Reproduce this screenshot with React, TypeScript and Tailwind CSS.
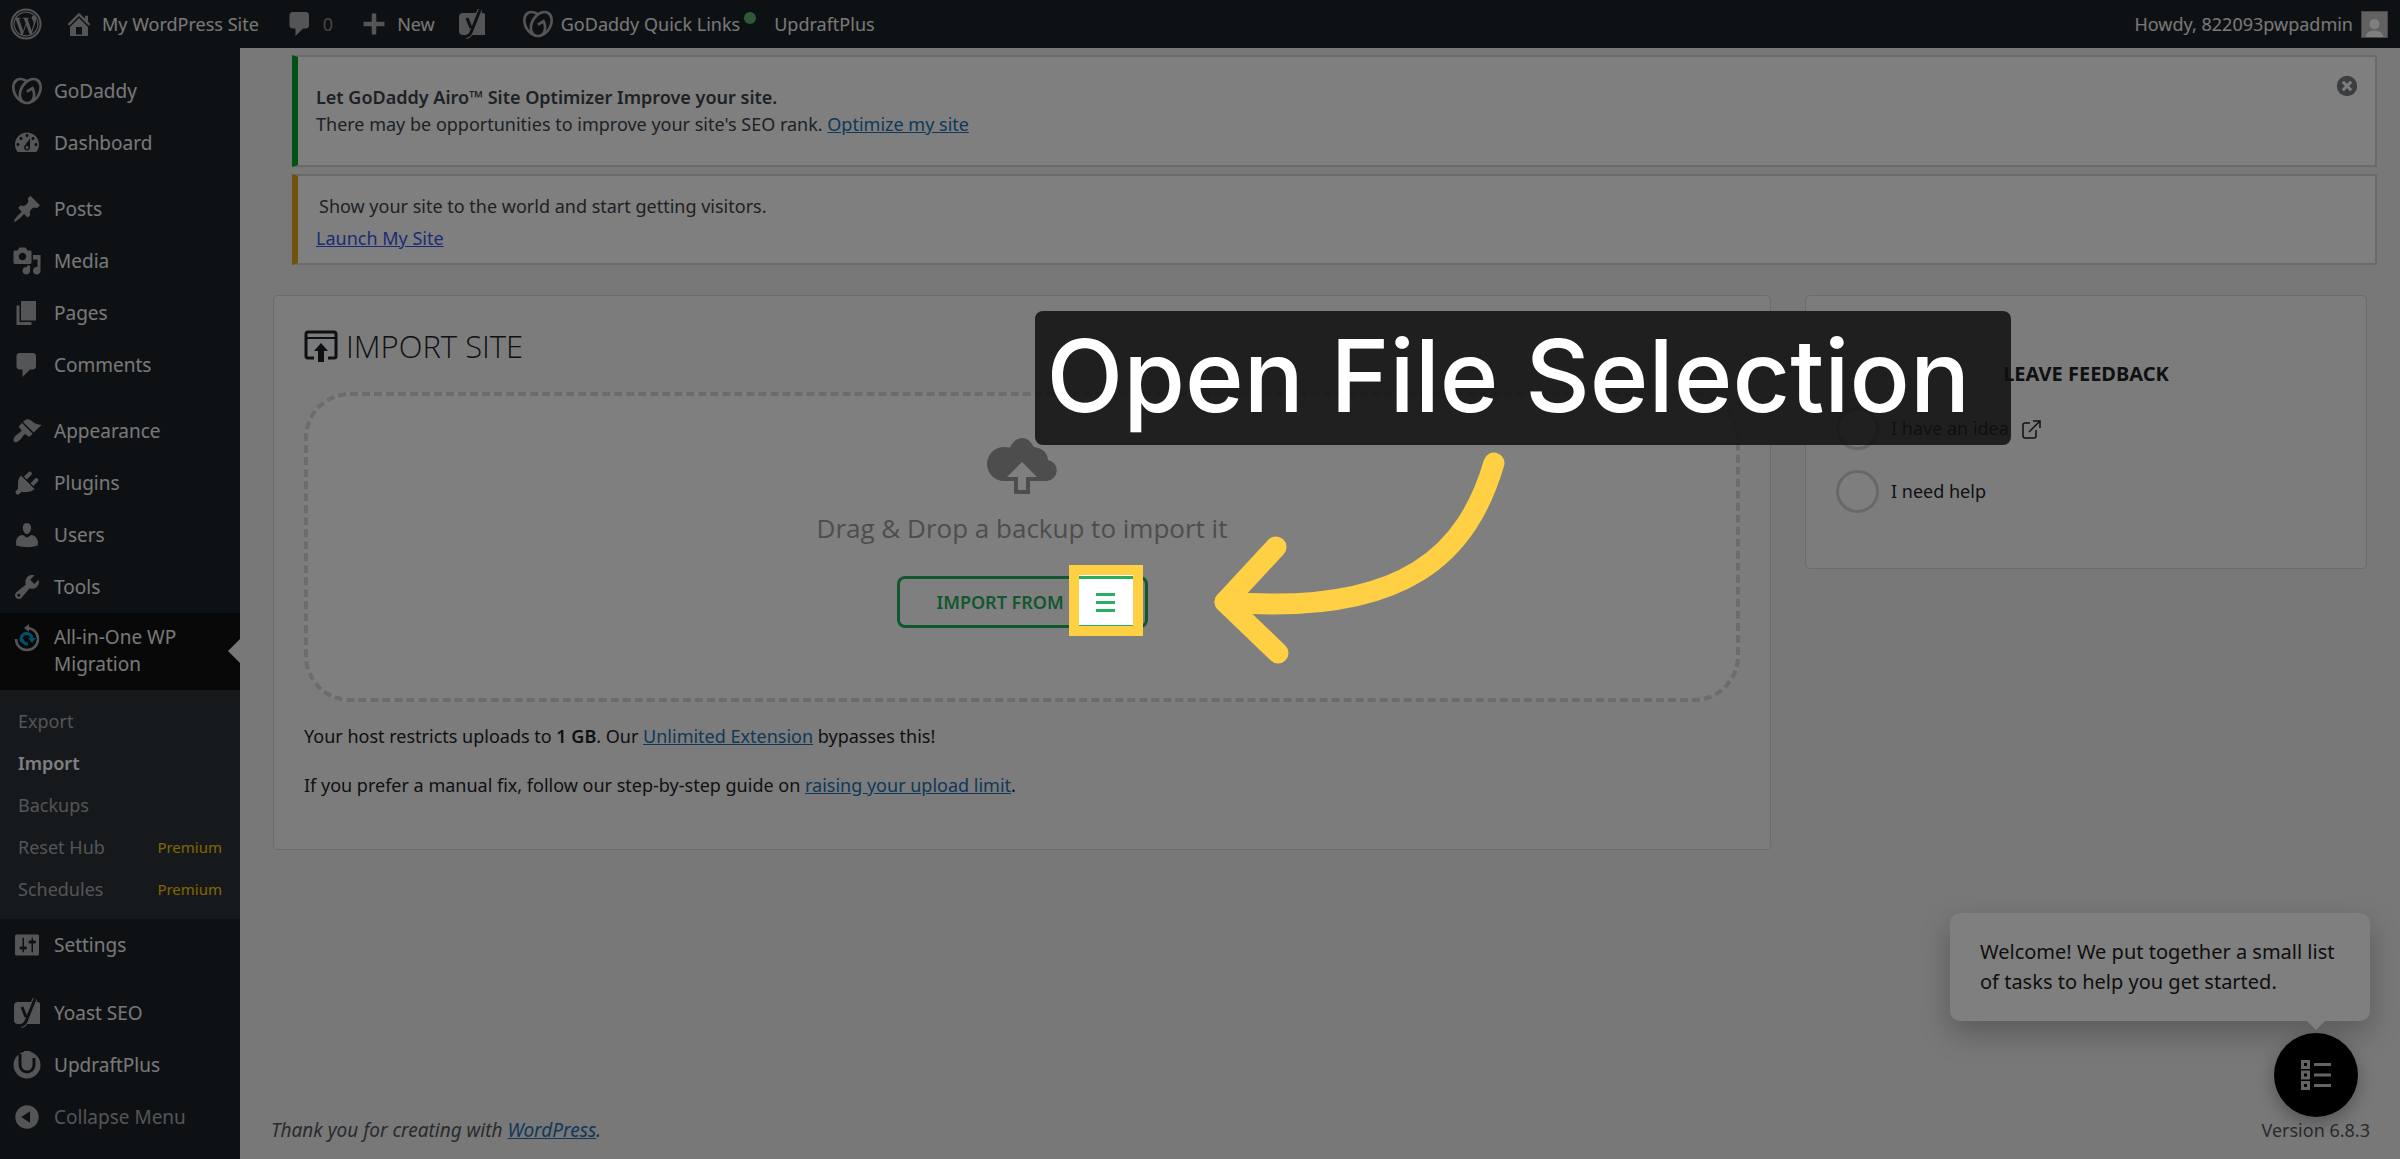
import type { ReactNode } from 'react';
import { FaWordpressSimple } from 'react-icons/fa';
import { SiGodaddy } from 'react-icons/si';

const ICONS = {
  home: 'M16 8.5l1.53 1.53-1.06 1.06L10 4.6l-6.47 6.49-1.06-1.06L10 2.5l4 4v-2h2v4zm-6-2.46l6 5.99V18H4v-5.97zM12 17v-5H8v5h4z',
  comments: 'M5 2h9c1.1 0 2 .9 2 2v7c0 1.1-.9 2-2 2h-2l-5 5v-5H5c-1.1 0-2-.9-2-2V4c0-1.1.9-2 2-2z',
  plus: 'M17 8.5v3h-5.5V17h-3v-5.5H3v-3h5.5V3h3v5.5z',
  dashboard:
    'M3.76 16h12.48c1.1-1.37 1.76-3.11 1.76-5 0-4.42-3.58-8-8-8s-8 3.58-8 8c0 1.89.66 3.63 1.76 5zM10 4c.55 0 1 .45 1 1s-.45 1-1 1-1-.45-1-1 .45-1 1-1zM6 6c.55 0 1 .45 1 1s-.45 1-1 1-1-.45-1-1 .45-1 1-1zm8 0c.55 0 1 .45 1 1s-.45 1-1 1-1-.45-1-1 .45-1 1-1zm-5.37 5.55L12 7v6c0 1.1-.9 2-2 2s-2-.9-2-2c0-.57.24-1.08.63-1.45zM4 10c.55 0 1 .45 1 1s-.45 1-1 1-1-.45-1-1 .45-1 1-1zm12 0c.55 0 1 .45 1 1s-.45 1-1 1-1-.45-1-1 .45-1 1-1zm-5 3c0-.55-.45-1-1-1s-1 .45-1 1 .45 1 1 1 1-.45 1-1z',
  posts:
    'M10.44 3.02l1.82-1.82 6.36 6.35-1.83 1.82c-1.05-.68-2.48-.57-3.41.36l-.75.75c-.92.93-1.04 2.35-.35 3.41l-1.83 1.82-2.41-2.41-2.8 2.79c-.42.42-3.38 2.71-3.8 2.29s1.86-3.39 2.28-3.81l2.79-2.79L4.1 9.36l1.83-1.82c1.05.69 2.48.57 3.4-.36l.75-.75c.93-.92 1.05-2.35.36-3.41z',
  media:
    'M13 11V4c0-.55-.45-1-1-1h-1.67L9 1H5L3.67 3H2c-.55 0-1 .45-1 1v7c0 .55.45 1 1 1h10c.55 0 1-.45 1-1zM7 4.5c1.38 0 2.5 1.12 2.5 2.5S8.38 9.5 7 9.5 4.5 8.38 4.5 7 5.62 4.5 7 4.5zM14 6h5v10.5c0 1.38-1.12 2.5-2.5 2.5S14 17.88 14 16.5s1.12-2.5 2.5-2.5c.17 0 .34.02.5.05V9h-3V6zm-4 8.05V13h2v3.5c0 1.38-1.12 2.5-2.5 2.5S7 17.88 7 16.5 8.12 14 9.5 14c.17 0 .34.02.5.05z',
  pages: 'M6 15V2h10v13H6zm-1 1h8v2H3V5h2v11z',
  appearance:
    'M14.48 11.06L7.41 3.99l1.5-1.5c.5-.56 2.3-.47 3.51.32 1.21.8 1.43 1.28 2.91 2.1 1.18.64 2.45 1.26 4.45.85zm-.71.71L6.7 4.7 4.93 6.47c-.39.39-.39 1.02 0 1.41l1.06 1.06c.39.39.39 1.03 0 1.42-.6.6-1.43 1.11-2.21 1.69-.35.26-.7.53-1.01.84C1.43 14.23.4 16.08 1.4 17.07c.99 1 2.84-.03 4.18-1.36.31-.31.58-.66.85-1.02.57-.78 1.08-1.61 1.69-2.21.39-.39 1.02-.39 1.41 0l1.06 1.06c.39.39 1.02.39 1.41 0z',
  plugins:
    'M13.11 4.36L9.87 7.6 8 5.73l3.24-3.24c.35-.34 1.05-.2 1.56.32.52.51.66 1.21.31 1.55zm-8 1.77l.91-1.12 9.01 9.01-1.19.84c-.71.71-2.63 1.16-3.82 1.16H6.14L4.9 17.26c-.59.59-1.54.59-2.12 0-.59-.58-.59-1.53 0-2.12l1.24-1.24v-3.88c0-1.13.4-3.19 1.09-3.89zm7.26 3.97l3.24-3.24c.34-.35 1.04-.21 1.55.31.52.51.66 1.21.31 1.55l-3.24 3.25z',
  users:
    'M10 9.25c-2.27 0-2.73-3.44-2.73-3.44C7 4.02 7.82 2 9.97 2c2.16 0 2.98 2.02 2.71 3.81 0 0-.41 3.44-2.68 3.44zm0 2.57L12.72 10c2.39 0 4.52 2.33 4.52 4.53v2.49s-3.65 1.13-7.24 1.13c-3.65 0-7.24-1.13-7.24-1.13v-2.49c0-2.25 1.94-4.48 4.47-4.48z',
  tools:
    'M16.68 9.77c-1.34 1.34-3.3 1.67-4.95.99l-5.41 6.52c-.99.99-2.59.99-3.58 0s-.99-2.59 0-3.57l6.52-5.42c-.68-1.65-.35-3.61.99-4.95 1.28-1.28 3.12-1.62 4.72-1.06l-2.89 2.89 2.82 2.82 2.86-2.87c.53 1.58.18 3.39-1.08 4.65zM3.81 16.21c.4.39 1.04.39 1.43 0 .4-.4.4-1.04 0-1.43-.39-.4-1.03-.4-1.43 0-.39.39-.39 1.03 0 1.43z',
  settings:
    'M18 16V4c0-.55-.45-1-1-1H3c-.55 0-1 .45-1 1v12c0 .55.45 1 1 1h14c.55 0 1-.45 1-1zM8 11h1c.55 0 1 .45 1 1s-.45 1-1 1H8v1.5c0 .28-.22.5-.5.5s-.5-.22-.5-.5V13H6c-.55 0-1-.45-1-1s.45-1 1-1h1V5.5c0-.28.22-.5.5-.5s.5.22.5.5V11zm5-2h-1c-.55 0-1-.45-1-1s.45-1 1-1h1V5.5c0-.28.22-.5.5-.5s.5.22.5.5V7h1c.55 0 1 .45 1 1s-.45 1-1 1h-1v5.5c0 .28-.22.5-.5.5s-.5-.22-.5-.5V9z',
  collapse:
    'M10 2.16c4.33 0 7.84 3.51 7.84 7.84s-3.51 7.84-7.84 7.84S2.16 14.33 2.16 10 5.71 2.16 10 2.16zm2 11.72V6.12L6.18 9.97z',
};

function Dashicon({ name }: { name: keyof typeof ICONS }) {
  return (
    <svg viewBox="0 0 20 20" className="size-[30px] shrink-0" fill="currentColor" fillRule="evenodd" aria-hidden>
      <path d={ICONS[name]} />
    </svg>
  );
}

function YoastIcon() {
  return (
    <svg viewBox="0 0 30 30" className="size-[30px] shrink-0" aria-hidden>
      <path d="M6 4h20q2 0 2 2v20H6q-4 0-4-4V8q0-4 4-4z" fill="currentColor" />
      <g fill="none" strokeLinejoin="round">
        <path d="M10 10l4 9M23 1l-8 20q-2 6-6 6.5" stroke="currentColor" strokeWidth="5" />
        <path d="M10 9l4 10M23 1l-8 20q-2 6-6 6.5" stroke="#1d2327" strokeWidth="3" />
      </g>
    </svg>
  );
}

function UpdraftIcon() {
  return (
    <svg viewBox="0 0 30 30" className="size-[30px] shrink-0" aria-hidden>
      <circle cx="15" cy="15" r="13.5" fill="currentColor" />
      <path d="M8 4v11a7 7 0 0 0 14 0V8" fill="none" stroke="#1d2327" strokeWidth="3" />
      <path d="M12 1h6l5 6-3-1v6h-8z" fill="currentColor" />
    </svg>
  );
}

function MigrationIcon() {
  return (
    <svg viewBox="0 0 30 30" className="size-[30px] shrink-0" fill="none" aria-hidden>
      <path d="M4 15a11 11 0 1 0 11-11" stroke="#a7aaad" strokeWidth="2.5" />
      <path d="M17 0v8l-5-4z" fill="#a7aaad" />
      <path d="M10 18a5.5 5.5 0 1 1 10-2M10 15a5.500 5.500 0 0 0 6 5" stroke="#00a0d2" strokeWidth="3" />
      <path d="M16 14h8l-4 5z" fill="#00a0d2" />
    </svg>
  );
}

function MenuItem({ icon, children }: { icon: ReactNode; children: ReactNode }) {
  return (
    <li>
      <a href="#" className="flex h-13 items-center gap-3 pl-3">
        <span className="text-[#a7aaad]">{icon}</span>
        {children}
      </a>
    </li>
  );
}

const SUBMENU = [
  { label: 'Export' },
  { label: 'Import', current: true },
  { label: 'Backups' },
  { label: 'Reset Hub', premium: true },
  { label: 'Schedules', premium: true },
];

function Sidebar() {
  return (
    <nav className="w-60 shrink-0 bg-[#1d2327] pt-[17px] text-[19px] text-[#f0f0f1]" aria-label="Main menu">
      <ul>
        <MenuItem icon={<SiGodaddy className="size-[30px]" />}>GoDaddy</MenuItem>
        <MenuItem icon={<Dashicon name="dashboard" />}>Dashboard</MenuItem>
      </ul>
      <ul className="mt-3.5">
        <MenuItem icon={<Dashicon name="posts" />}>Posts</MenuItem>
        <MenuItem icon={<Dashicon name="media" />}>Media</MenuItem>
        <MenuItem icon={<Dashicon name="pages" />}>Pages</MenuItem>
        <MenuItem icon={<Dashicon name="comments" />}>Comments</MenuItem>
      </ul>
      <ul className="mt-3.5">
        <MenuItem icon={<Dashicon name="appearance" />}>Appearance</MenuItem>
        <MenuItem icon={<Dashicon name="plugins" />}>Plugins</MenuItem>
        <MenuItem icon={<Dashicon name="users" />}>Users</MenuItem>
        <MenuItem icon={<Dashicon name="tools" />}>Tools</MenuItem>
        <li>
          <a href="#" className="relative flex items-start gap-3 bg-[#101010] pt-[11px] pb-3 pl-3 leading-[27px]">
            <MigrationIcon />
            <span>
              All-in-One WP
              <br />
              Migration
            </span>
            <span className="absolute top-[26px] right-0 border-y-12 border-r-12 border-y-transparent border-r-[#f0f0f1]" />
          </a>
          <ul className="bg-[#2c3338] px-[18px] pt-2.5 pb-[9px] text-[18px] text-[#a7aaad]">
            {SUBMENU.map((item) => (
              <li key={item.label}>
                <a href="#" className="flex h-[42px] items-center justify-between">
                  <span className={item.current ? 'font-semibold text-white' : ''}>{item.label}</span>
                  {item.premium && <span className="text-[15px] text-[#ffcc00]">Premium</span>}
                </a>
              </li>
            ))}
          </ul>
        </li>
        <MenuItem icon={<Dashicon name="settings" />}>Settings</MenuItem>
      </ul>
      <ul className="mt-4">
        <MenuItem icon={<YoastIcon />}>Yoast SEO</MenuItem>
        <MenuItem icon={<UpdraftIcon />}>UpdraftPlus</MenuItem>
        <li>
          <button type="button" className="flex h-13 w-full items-center gap-3 pl-3 text-[#a7aaad]">
            <Dashicon name="collapse" />
            Collapse Menu
          </button>
        </li>
      </ul>
    </nav>
  );
}

function AdminBar() {
  return (
    <header className="flex h-12 items-center bg-[#1d2327] pr-3 pl-2.5 text-[18px] text-[#f0f0f1]">
      <a href="#" aria-label="About WordPress" className="text-[#a7aaad]">
        <svg viewBox="0 0 32 32" className="size-8" aria-hidden>
          <circle cx="16" cy="16" r="14.5" fill="none" stroke="currentColor" strokeWidth="2" />
          <FaWordpressSimple x="3" y="3" size={26} />
        </svg>
      </a>
      <a href="#" className="ml-5.5 flex items-center gap-2">
        <span className="text-[#a7aaad]">
          <Dashicon name="home" />
        </span>
        My WordPress Site
      </a>
      <a href="#" className="ml-6.5 flex items-center gap-2 text-[#a7aaad]">
        <Dashicon name="comments" />
        <span className="text-[#8a8d90]">0</span>
      </a>
      <a href="#" className="ml-6.5 flex items-center gap-2">
        <span className="text-[#a7aaad]">
          <Dashicon name="plus" />
        </span>
        New
      </a>
      <a href="#" aria-label="Yoast SEO" className="ml-5.5 text-[#a7aaad]">
        <YoastIcon />
      </a>
      <a href="#" className="ml-9 flex items-center gap-2">
        <SiGodaddy className="size-[30px] text-[#a7aaad]" />
        GoDaddy Quick Links
        <span className="mb-3 -ml-1 size-3 rounded-full bg-[#5cb270]" />
      </a>
      <a href="#" className="ml-4.5">
        UpdraftPlus
      </a>
      <a href="#" className="ml-auto flex items-center gap-2">
        Howdy, 822093pwpadmin
        <svg viewBox="0 0 27 27" className="size-[27px] border border-[#8c8f94]" aria-hidden>
          <rect width="27" height="27" fill="#c3c3c3" />
          <circle cx="13.5" cy="13" r="5.5" fill="#fff" />
          <path d="M4 27q1-7 9.5-7t9.5 7z" fill="#fff" />
        </svg>
      </a>
    </header>
  );
}

function Notices() {
  return (
    <div className="mr-[23px] ml-[52px] flex flex-col gap-[7px] pt-[7px] text-[18px] leading-[27px]">
      <div className="flex items-start justify-between border-2 border-l-6 border-[#d4d5d7] border-l-[#00a32a] bg-white pt-[27px] pr-4 pb-[27px] pl-[18px]">
        <p>
          <strong className="font-semibold">Let GoDaddy Airo™ Site Optimizer Improve your site.</strong>
          <br />
          There may be opportunities to improve your site's SEO rank.{' '}
          <a href="#" className="text-[#2271b1] underline">
            Optimize my site
          </a>
        </p>
        <button type="button" aria-label="Dismiss this notice" className="-mt-2.5 text-[#787c82]">
          <svg viewBox="0 0 20 20" className="size-6" aria-hidden>
            <circle cx="10" cy="10" r="8.5" fill="currentColor" />
            <path d="M6.5 6.5l7 7M13.5 6.5l-7 7" stroke="#fff" strokeWidth="2.5" />
          </svg>
        </button>
      </div>
      <div className="border-2 border-l-6 border-[#d4d5d7] border-l-[#dba617] bg-white pt-[17px] pb-[11px] pl-[18px]">
        <p className="pl-[3px]">Show your site to the world and start getting visitors.</p>
        <a href="#" className="mt-[5px] inline-block text-[#3858e9] underline">
          Launch My Site
        </a>
      </div>
    </div>
  );
}

// Walkthrough callout: the spread shadow dims everything outside the frame.
function Callout() {
  return (
    <>
      <div className="pointer-events-none absolute -top-[11px] left-[172px] z-40 h-[71px] w-[74px] border-10 border-[#ffd043] shadow-[0_0_0_3000px_rgba(0,0,0,0.5)]" />
      <div className="absolute -top-[265px] left-[138px] z-50 flex h-[134px] w-[976px] items-center rounded-lg bg-[rgba(15,15,15,0.85)] pb-1 pl-3 font-['Inter',sans-serif] text-[100px] leading-[120px] font-medium whitespace-nowrap text-white">
        Open File Selection
      </div>
      <svg
        viewBox="0 0 320 230"
        className="pointer-events-none absolute -top-[127px] left-[303px] z-50 h-[230px] w-[320px]"
        fill="none"
        stroke="#ffd043"
        strokeWidth="21"
        strokeLinecap="round"
        strokeLinejoin="round"
        aria-hidden
      >
        <path d="M294 14C268 102 208 168 25 153" />
        <path d="M76 98L25 153l53 51" />
      </svg>
    </>
  );
}

function ImportCard() {
  return (
    <section className="flex-1 rounded-[5px] border border-[#d6d6d6] bg-[#f9f9f9] px-[30px] pt-7 pb-[50px] text-[18px] leading-[27px]">
      <h1 className="flex items-center gap-2 font-['Open_Sans',sans-serif] text-[31px] leading-[44px] font-light">
        <svg viewBox="0 0 34 32" className="h-8 w-[34px]" fill="none" stroke="currentColor" strokeWidth="3" aria-hidden>
          <path d="M10 28H4q-2 0-2-2V4q0-2 2-2h26q2 0 2 2v22q0 2-2 2h-6" />
          <path d="M2 8h30" strokeWidth="2" />
          <path d="M17 13l7 8h-4v11h-6V21h-4z" fill="currentColor" stroke="none" />
        </svg>
        IMPORT SITE
      </h1>
      <div className="mt-6 flex h-[310px] flex-col items-center rounded-[46px] border-4 border-dashed border-[#d9d9d9] bg-white pt-[42px]">
        <svg viewBox="0 0 70 56" className="h-14 w-[70px]" aria-hidden>
          <path
            d="M17 43a17 17 0 0 1 0-34q3 0 6 .5Q28 0 35 0t12 9q13 2 14 13a10.6 10.6 0 0 1-1 21H43v13H27V43z"
            fill="#9b9b9b"
          />
          <path d="M35 24l15 15H39v13h-8V39H20z" fill="#fff" />
        </svg>
        <p className="mt-4 font-['Open_Sans',sans-serif] text-[26px] leading-9 text-[#9b9b9b]">
          Drag &amp; Drop a backup to import it
        </p>
        <div className="relative mt-[30px]">
          <button
            type="button"
            className="flex h-13 w-[251px] items-center justify-between rounded-lg border-3 border-[#27ae60] bg-white pr-[30px] pl-[37px] text-[18px] font-semibold text-[#27ae60]"
          >
            IMPORT FROM
            <svg viewBox="0 0 19 19" className="size-[19px]" fill="currentColor" aria-hidden>
              <path d="M0 0h19v3H0zM0 8h19v3H0zM0 16h19v3H0z" />
            </svg>
          </button>
          <Callout />
        </div>
      </div>
      <p className="mt-[21px]">
        Your host restricts uploads to <strong className="font-semibold">1 GB</strong>. Our{' '}
        <a href="#" className="text-[#2271b1] underline">
          Unlimited Extension
        </a>{' '}
        bypasses this!
      </p>
      <p className="mt-[22px]">
        If you prefer a manual fix, follow our step-by-step guide on{' '}
        <a href="#" className="text-[#2271b1] underline">
          raising your upload limit
        </a>
        .
      </p>
    </section>
  );
}

function FeedbackCard() {
  const radio = 'size-[43px] shrink-0 appearance-none rounded-full border-3 border-[#d0d0d0] bg-[#fdfdfd]';
  return (
    <section className="h-[274px] w-[562px] rounded-[5px] border border-[#d6d6d6] bg-[#f9f9f9] px-[30px] pt-[60px] text-[18px]">
      <h2 className="text-center text-[20px] leading-9 font-bold">LEAVE FEEDBACK</h2>
      <div className="mt-[15px] flex flex-col gap-5">
        <label className="flex items-center gap-3">
          <input type="radio" name="feedback" className={radio} />
          I have an idea
          <svg
            viewBox="0 0 20 20"
            className="size-5"
            fill="none"
            stroke="currentColor"
            strokeWidth="1.5"
            aria-hidden
          >
            <path d="M9 4H4q-2 0-2 2v11q0 2 2 2h9q2 0 2-2v-6M12 2h7v7M18 3L8 13" />
          </svg>
        </label>
        <label className="flex items-center gap-3">
          <input type="radio" name="feedback" className={radio} />
          I need help
        </label>
      </div>
    </section>
  );
}

function TaskHelper() {
  return (
    <aside className="absolute right-[30px] bottom-[42px] flex flex-col items-end">
      <div className="relative w-[420px] rounded-[10px] bg-white px-[30px] py-6 text-[20px] leading-[30px] text-[#1d1d1d] shadow-[0_12px_30px_rgba(0,0,0,0.25)]">
        Welcome! We put together a small list
        <br />
        of tasks to help you get started.
        <span className="absolute right-11 -bottom-[9px] border-x-10 border-t-10 border-x-transparent border-t-white" />
      </div>
      <button
        type="button"
        aria-label="Open task list"
        className="mt-3 mr-3 flex size-[84px] items-center justify-center rounded-full bg-black text-[#c8c8c8] shadow-[0_6px_18px_rgba(0,0,0,0.3)]"
      >
        <svg viewBox="0 0 30 30" className="size-[30px]" fill="none" stroke="currentColor" strokeWidth="3" aria-hidden>
          <path d="M1.5 1.5h6v6h-6zM1.5 12h6v6h-6zM1.5 22.5h6v6h-6zM13 4.5h17M13 15h17M13 25.5h17" />
        </svg>
      </button>
    </aside>
  );
}

export default function App() {
  return (
    <div className="relative flex min-h-screen flex-col overflow-hidden bg-[#f0f0f1] font-['Noto_Sans',sans-serif] text-[#3c434a]">
      <AdminBar />
      <div className="flex flex-1">
        <Sidebar />
        <div className="flex min-w-0 flex-1 flex-col">
          <main>
            <Notices />
            <div className="mx-[33px] mt-[30px] flex items-start gap-[34px] text-[#1d2327]">
              <ImportCard />
              <FeedbackCard />
            </div>
          </main>
          <footer className="mt-auto flex justify-between pr-[30px] pb-3.5 pl-[31px] text-[#50575e]">
            <p className="text-[19px] leading-[30px] italic">
              Thank you for creating with{' '}
              <a href="#" className="text-[#2271b1] underline">
                WordPress
              </a>
              .
            </p>
            <p className="text-[18px] leading-[30px]">Version 6.8.3</p>
          </footer>
        </div>
      </div>
      <TaskHelper />
    </div>
  );
}
